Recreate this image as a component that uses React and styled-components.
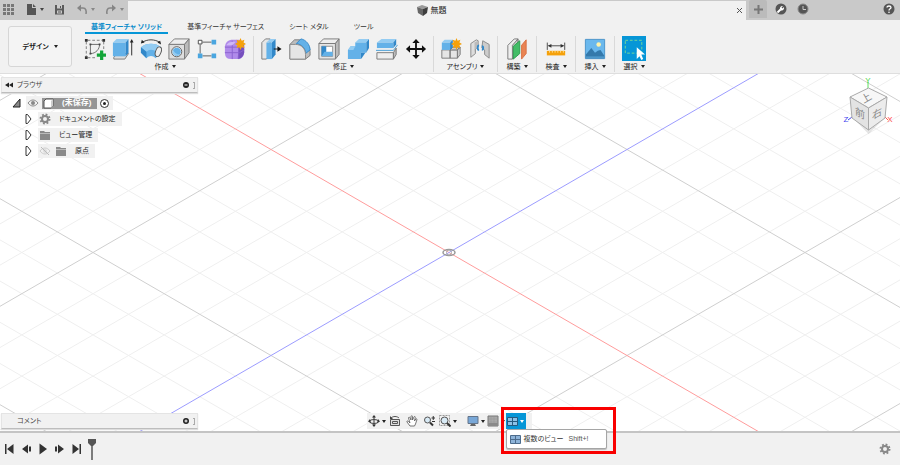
import React, { useState } from "react";
import styled, { createGlobalStyle } from "styled-components";

const GlobalStyle = createGlobalStyle`
    * {
        box-sizing: border-box;
    }

    body {
        margin: 0;
        background: #f1f1f1;
        color: #222;
        font-family: "Liberation Sans", "Noto Sans CJK JP", sans-serif;
        font-size: 7px;
        line-height: 10px;
        font-feature-settings: "palt";
    }

    button {
        display: flex;
        align-items: center;
        justify-content: center;
        margin: 0;
        padding: 0;
        border: 0;
        background: none;
        color: inherit;
        font: inherit;
        font-feature-settings: inherit;
        cursor: pointer;
    }

    svg {
        display: block;
        flex: none;
    }
`;

const Page = styled.div`
    display: flex;
    flex-direction: column;
    min-height: 100vh;
`;

const Caret = styled.span`
    flex: none;
    border: 2px solid transparent;
    border-top: 3px solid ${(props) => props.$color || "#222"};
    border-bottom: 0;
`;

/* title bar */

const TitleBar = styled.header`
    display: flex;
    align-items: stretch;
    height: 20px;
    background: #c9c9c9;
`;

const QuickAccess = styled.div`
    display: flex;
    align-items: center;
    flex: none;
    width: 128px;
    padding: 0 4px 2px 3px;
    justify-content: space-between;
`;

const QuickButton = styled.button`
    gap: 3px;
    height: 16px;
`;

const DocumentTab = styled.div`
    display: flex;
    align-items: center;
    flex: 1;
    margin-top: 1px;
    padding-right: 3px;
    background: #f1f1f1;
`;

const DocumentTitle = styled.div`
    display: flex;
    align-items: center;
    justify-content: center;
    flex: 1;
    gap: 3px;
    font-size: 8px;
`;

const CloseButton = styled.button`
    width: 8px;
    height: 12px;
`;

const TitleActions = styled.div`
    display: flex;
    align-items: center;
    flex: none;
    width: 154px;
    gap: 10px;
    padding: 0 5px 2px 3px;

    button:last-child {
        margin-left: auto;
    }
`;

const NewTabButton = styled.button`
    width: 18px;
    height: 18px;
    margin-right: -2px;
    border-radius: 2px 2px 0 0;
    background: #bbb;
`;

/* ribbon */

const Ribbon = styled.div`
    display: flex;
    flex: none;
    padding-left: 8px;
    border-bottom: 1px solid #dedede;
    background: #f1f1f1;
`;

const WorkspaceButton = styled.button`
    flex: none;
    gap: 5px;
    width: 64px;
    height: 41px;
    margin: 6px 5px 6px 0;
    border: 1px solid #d6d6d6;
    border-radius: 3px;
    background: #f4f4f4;
    font-weight: bold;
`;

const RibbonMain = styled.div`
    flex: 1;
`;

const TabList = styled.nav`
    display: flex;
    gap: 13px;
    padding: 2px 0 2px 8px;
`;

const RibbonTab = styled.button`
    height: 12px;
    padding: 0 6px;
    border-bottom: 2px solid ${(props) => (props.$active ? "#0696d7" : "transparent")};
    color: ${(props) => (props.$active ? "#0b8ccb" : "#333")};
    font-weight: ${(props) => (props.$active ? "bold" : "normal")};
    white-space: nowrap;
`;

const GroupRow = styled.div`
    display: flex;
`;

const Group = styled.section`
    padding: 0 ${(props) => props.$pad}px;

    & + & {
        border-left: 1px solid #d9d9d9;
    }
`;

const Tools = styled.div`
    display: flex;
    gap: ${(props) => props.$gap}px;
`;

const ToolButton = styled.button`
    width: 24px;
    height: 25px;
    background: ${(props) => (props.$active ? "#0696d7" : "none")};
`;

const GroupLabel = styled.button`
    gap: 3px;
    width: 100%;
    height: 11px;
    white-space: nowrap;
`;

/* modelling canvas */

const Canvas = styled.main`
    position: relative;
    display: flex;
    flex: 1;
    flex-direction: column;
    justify-content: space-between;
    background: #fff;
`;

const GridDrawing = styled.svg`
    position: absolute;
    inset: 0;
    width: 100%;
    height: 100%;
`;

const CanvasTop = styled.div`
    position: relative;
    display: flex;
    justify-content: space-between;
    padding: 3px 4px 0 1px;
`;

const BrowserColumn = styled.aside`
    width: 22%;
`;

const PanelBar = styled.div`
    display: flex;
    align-items: center;
    gap: 4px;
    height: 16px;
    padding: 0 2px 0 3px;
    border: 1px solid #e4e4e4;
    border-bottom-color: #bdbdbd;
    background: #f1f1f1;
    box-shadow: 0 1px 1px #ddd;
`;

const PanelTitle = styled.h2`
    flex: 1;
    margin: 0;
    padding-left: ${(props) => (props.$indent ? "12px" : "0")};
    color: #444;
    font-size: 7px;
    font-weight: normal;
`;

const Handle = styled.span`
    width: 2px;
    height: 7px;
    border: 1px solid #aaa;
    border-left: 0;
`;

const Tree = styled.ul`
    display: flex;
    flex-direction: column;
    gap: 2px;
    margin: 3px 0 0;
    padding: 0 0 0 10px;
    list-style: none;
`;

const TreeRow = styled.li`
    display: flex;
    align-items: center;
    gap: 5px;
    height: 14px;
    padding-left: ${(props) => (props.$level ? "12px" : "0")};
`;

const TreeItem = styled.div`
    display: flex;
    align-items: center;
    gap: ${(props) => (props.$tight ? "3px" : "8px")};
    height: 14px;
    padding: 0 ${(props) => (props.$tight ? "4px" : "6px")} 0 1px;
    background: #f1f1f1;
    white-space: nowrap;
`;

const IconPair = styled.span`
    display: flex;
    gap: 4px;
`;

const RootName = styled.span`
    display: flex;
    align-items: center;
    gap: 8px;
    height: 11px;
    padding: 0 6px 0 1px;
    background: #959595;
    color: #fff;
    font-size: 8px;
    font-weight: bold;
`;

const CanvasBottom = styled.div`
    position: relative;
    display: grid;
    grid-template-columns: 22% 1fr 22%;
    align-items: center;
    padding: 0 3px 2px 1px;
`;

const ViewTools = styled.div`
    display: flex;
    justify-self: center;
    height: 16px;
    padding-right: 6px;
    background: #f1f1f1;
`;

const ViewButton = styled.button`
    gap: 2px;
    width: ${(props) => (props.$menu ? "20px" : "17px")};
    height: 16px;
    margin-left: ${(props) => (props.$spaced ? "8px" : "0")};
    background: ${(props) => (props.$active ? "#0696d7" : "none")};
`;

const MultiView = styled.div`
    position: relative;
`;

const Highlight = styled.div`
    position: absolute;
    top: -6px;
    left: -5px;
    z-index: 1;
    width: 115px;
    height: 47px;
    border: 3px solid #f90000;
    pointer-events: none;
`;

const Tooltip = styled.div`
    position: absolute;
    top: 16px;
    left: 0;
    display: flex;
    align-items: center;
    gap: 3px;
    width: 101px;
    height: 20px;
    padding-left: 3px;
    border: 1px solid #a5a5a5;
    border-radius: 2px;
    background: #fff;
    box-shadow: 0 1px 1px #bbb;
    color: #333;
    white-space: nowrap;
`;

const Shortcut = styled.kbd`
    margin-left: 2px;
    color: #555;
    font-family: inherit;
`;

/* timeline */

const Timeline = styled.footer`
    display: flex;
    align-items: center;
    flex: none;
    gap: 3px;
    height: 34px;
    padding: 0 8px 0 2px;
    border-top: 2px solid #c4c4c4;
    background: #f1f1f1;
`;

const TimelineButton = styled.button`
    width: 14px;
    height: 16px;
    margin-left: ${(props) => (props.$end ? "auto" : "0")};
`;

const Icon = ({ size = 22, box = 24, width, children }) => (
    <svg width={width || size} height={size} viewBox={`0 0 ${width ? width : box} ${box}`} fill="none" aria-hidden="true">
        {children}
    </svg>
);

const BLUE = "#63b1e8";
const DEEP = "#3288c9";
const PALE = "#94ccf2";

const toolIcons = {
    sketch: (
        <Icon>
            <path d="M4 2.500h16M2.500 4v16M21.500 4v10M4 21.500h10" stroke="#777" strokeDasharray="3 2" />
            <path d="M1 1h3v3H1zM20 1h3v3h-3zM1 20h3v3H1z" fill="#333" />
            <path d="M7 17V7h10c0 5-4 10-10 10z" stroke="#666" />
            <path d="M6 6h2v2H6zM16 6h2v2h-2zM6 16h2v2H6z" fill="#444" />
            <path d="M17.500 13.500h3.500V17H24v3.500h-3V24h-3.500v-3.500H14V17h3.500z" fill="#13a538" />
        </Icon>
    ),
    extrude: (
        <Icon>
            <path d="M2 21l4-4h12l-4 6H2z" fill="#ddd" stroke="#777" />
            <path d="M1 5l4-4h13l-3 4z" fill={PALE} />
            <path d="M1 5h14v15H1z" fill={BLUE} />
            <path d="M15 5l3-4v15l-3 4z" fill={DEEP} />
            <path d="M21.500 19V4" stroke="#222" />
            <path d="M19.500 5l2-4 2 4z" fill="#222" />
        </Icon>
    ),
    revolve: (
        <Icon>
            <path d="M1 10c6-5 16-5 22 0v5l-6 7c-3-3-7-3-10 0l-6-6z" fill={BLUE} />
            <path d="M1 10c6-5 16-5 22 0l-5 5c-4-3-8-3-11 0z" fill={PALE} />
            <path d="M7 15v7l-6-6v-6z" fill={DEEP} />
            <ellipse cx="20" cy="15" rx="3" ry="5.500" transform="rotate(20 20 15)" fill="#eee" stroke="#555" />
            <path d="M2 5c6-4 14-4 20 0" stroke="#333" />
            <path d="M1 6l1-4 3 3zM23 7l-4-2 3-2z" fill="#222" />
        </Icon>
    ),
    hole: (
        <Icon>
            <path d="M1 7l6-6h16l-5 6z" fill="#eee" stroke="#777" />
            <path d="M18 7l5-6v15l-5 7z" fill="#bbb" stroke="#777" />
            <path d="M1 7h17v16H1z" fill="#dedede" stroke="#777" />
            <circle cx="9.500" cy="15" r="5.500" fill="#fff" stroke="#555" />
            <circle cx="9.500" cy="15" r="4.500" fill={BLUE} />
            <path d="M5 16c2 4 6 4 8 2-4 0-6-2-7-5z" fill={PALE} />
        </Icon>
    ),
    pattern: (
        <Icon>
            <path d="M7 4.500h10M4.500 7v10M7 19.500h10" stroke="#555" />
            <path d="M2.500 2.500h4v4h-4z" fill="#fff" stroke="#444" />
            <path d="M17 2h5v5h-5zM17 17h5v5h-5zM2 17h5v5H2z" fill="#4aa6e0" />
        </Icon>
    ),
    form: (
        <Icon>
            <path d="M8 2h8q6 1 6 7v7q-1 7-8 7H8q-7 0-7-7V9q1-6 7-7z" fill="#b08bea" />
            <path d="M16 9l6-2v9q-1 6-7 7z" fill="#7650bd" />
            <path d="M1 10h15l6-3M1 16h16l5-3M9 3v20M16 9v14" stroke="#8a63cf" />
            <path d="M3 7q2-3 6-3h4l-4 4H3z" fill="#cfb7f7" />
            <path d="M18 0l1.300 3 3-1-1 3 2.700 1.500-2.700 1.500 1 3-3-1L18 13l-1.300-3-3 1 1-3L12 6.500 14.700 5l-1-3 3 1z" fill="#f5a10a" />
        </Icon>
    ),
    pressPull: (
        <Icon>
            <path d="M2 5l4-4h5v17l-4 5H2z" fill="#e6e6e6" stroke="#777" />
            <path d="M7 5l4-4h6l-4 4z" fill={PALE} />
            <path d="M7 5h6v18H7z" fill={BLUE} />
            <path d="M13 5l4-4v17l-4 5z" fill={DEEP} />
            <path d="M15 12h6" stroke="#111" />
            <path d="M19 9l4.500 3-4.500 3z" fill="#111" />
        </Icon>
    ),
    fillet: (
        <Icon>
            <path d="M1 7l5-5h5c6 0 12 6 12 13v4l-5 4H1z" fill="#bdbdbd" stroke="#777" />
            <path d="M8 6l5-5c6 1 10 7 10 12l-5 4C18 11 14 7 8 6z" fill={BLUE} stroke={DEEP} />
            <path d="M1 23V7h6c7 0 11 5 11 11v5z" fill="#e5e5e5" stroke="#888" />
        </Icon>
    ),
    shell: (
        <Icon>
            <path d="M1 6l5-5h17l-4 5z" fill="#eee" stroke="#777" />
            <path d="M19 6l4-5v17l-4 5z" fill="#bbb" stroke="#777" />
            <path d="M1 6h18v17H1z" fill="#e5e5e5" stroke="#777" />
            <path d="M4 9h12v11H4z" fill="#fff" stroke="#888" />
            <path d="M4 9l5 6h7v5H4z" fill={BLUE} />
            <path d="M4 9l5 0v6H7l-3 5z" fill={DEEP} />
        </Icon>
    ),
    combine: (
        <Icon>
            <path d="M9 5l4-4h11l-3 4z" fill={PALE} />
            <path d="M21 5l3-4v10l-3 5z" fill={DEEP} />
            <path d="M1 13l3-4h5V5h12v11h-6v7H1z" fill={BLUE} />
            <path d="M15 16h5l-4 6-1 1z" fill={DEEP} />
            <path d="M1 13l3-4h5l-2 4z" fill={PALE} />
        </Icon>
    ),
    split: (
        <Icon>
            <path d="M1 5l5-4h16l-3 4z" fill={PALE} />
            <path d="M1 5h18v6H1z" fill={BLUE} />
            <path d="M19 5l3-4v6l-3 4z" fill={DEEP} />
            <path d="M0 13.500h19l4.500-6" stroke="#4199d4" />
            <path d="M1 16h18v7H1z" fill="#eee" stroke="#777" />
            <path d="M19 16l3-5v7l-3 5z" fill="#bbb" stroke="#777" />
        </Icon>
    ),
    move: (
        <Icon>
            <path d="M12 4v16M4 12h16" stroke="#111" strokeWidth="2" />
            <path d="M8 5.500L12 1l4 4.500zM8 18.500l4 4.500 4-4.500zM5.500 8L1 12l4.500 4zM18.500 8l4.500 4-4.500 4z" fill="#111" />
        </Icon>
    ),
    component: (
        <Icon>
            <path d="M2 13h9v9H2zM11 13h8v9h-8z" fill="#e5e5e5" stroke="#777" />
            <path d="M11 13l3-3h8l-3 3zM19 13l3-3v8l-3 4z" fill="#ccc" stroke="#777" />
            <path d="M2 5l3-3h9l-3 3z" fill={PALE} />
            <path d="M2 5h9v8H2z" fill={BLUE} />
            <path d="M11 5l3-3v8l-3 3z" fill={DEEP} />
            <path d="M18 0l1.200 3 3-1-1 3L24 6.500 21.200 8l1 3-3-1L18 13l-1.200-3-3 1 1-3L12 6.500 14.800 5l-1-3 3 1z" fill="#f5a10a" />
        </Icon>
    ),
    joint: (
        <Icon>
            <path d="M2 6l6-4 2 1v7l-3 2v5l-5 4z" fill="#ddd" stroke="#888" />
            <path d="M6 5l4-2v7l-3 2-1 4z" fill="#bbb" />
            <path d="M15 3l7 4v15l-5-4v-5l-3-2z" fill="#ccc" stroke="#888" />
            <path d="M11 8c-2 0-2 5 0 5M14 9c2 0 2 4 0 4" stroke={DEEP} strokeWidth="2" />
        </Icon>
    ),
    construct: (
        <Icon>
            <path d="M2 8l7-7h4v15l-6 7H2z" fill="#eee" stroke="#777" />
            <path d="M7 8l6-7v15l-6 7z" fill="#ccc" stroke="#777" />
            <path d="M8 9l7-6v14l-7 6z" fill="#43bd67" stroke="#299b4b" />
            <path d="M17 8l5-6v15l-5 6z" fill="#e98453" stroke="#d96d3e" />
        </Icon>
    ),
    measure: (
        <Icon>
            <path d="M2.500 5v8M21.500 5v8M4 8.500h16" stroke="#444" />
            <path d="M3 8.500l4-2v4zM21 8.500l-4-2v4z" fill="#333" />
            <path d="M2 14h20v5H2z" fill="#f5a10a" />
            <path d="M5 14v2M8 14v2M11 14v2M14 14v2M17 14v2M20 14v2" stroke="#ffdf9a" />
        </Icon>
    ),
    insert: (
        <Icon>
            <path d="M1.500 1.500h21v21h-21z" fill="#6ab8ed" stroke="#4792c7" />
            <circle cx="16" cy="7" r="2.500" fill="#fff3ac" />
            <path d="M2 18l6-7 4 5 3-2 3-1 4 6v3H2z" fill="#3479ab" />
            <path d="M2 20h20v2H2z" fill="#4e98ca" />
        </Icon>
    ),
    select: (
        <Icon>
            <path d="M2.500 2.500h18v14h-18z" stroke="#7bdc95" strokeDasharray="3 2" />
            <path d="M15 10v13l3-3 2 4 2-1-2-5h4z" fill="#fff" />
        </Icon>
    ),
};

const groups = [
    { label: "作成", pad: 6, gap: 4, tools: ["sketch", "extrude", "revolve", "hole", "pattern", "form"] },
    { label: "修正", pad: 5, gap: 5, tools: ["pressPull", "fillet", "shell", "combine", "split", "move"] },
    { label: "アセンブリ", pad: 5, gap: 5, tools: ["component", "joint"] },
    { label: "構築", pad: 7, gap: 0, tools: ["construct"] },
    { label: "検査", pad: 7, gap: 0, tools: ["measure"] },
    { label: "挿入", pad: 7, gap: 0, tools: ["insert"] },
    { label: "選択", pad: 7, gap: 0, tools: ["select"] },
];

const tabs = ["基準フィーチャ ソリッド", "基準フィーチャ サーフェス", "シート メタル", "ツール"];

const EyeIcon = ({ hidden }) => (
    <Icon size={12} box={12}>
        <path d="M1 6c3-4 7-4 10 0-3 4-7 4-10 0z" stroke={hidden ? "#ccc" : "#8b8b8b"} />
        <circle cx="6" cy="6" r="2" fill={hidden ? "#ddd" : "#888"} />
        {hidden && <path d="M2 2l8 8" stroke="#bbb" />}
    </Icon>
);

const FolderIcon = () => (
    <Icon size={12} box={12}>
        <path d="M1 2h4l1 1h5v8H1z" fill="#8a8a8a" />
        <path d="M1 4.500h10" stroke="#bbb" />
    </Icon>
);

const GearIcon = ({ color = "#888" }) => (
    <Icon size={12} box={12}>
        <circle cx="6" cy="6" r="4.500" stroke={color} strokeWidth="2" strokeDasharray="1.770 1.770" />
        <circle cx="6" cy="6" r="3" stroke={color} strokeWidth="2" />
    </Icon>
);

const ArrowIcon = ({ open }) => (
    <Icon size={10} box={10}>
        {open ? (
            <path d="M9 1v8H2z" fill="#888" stroke="#222" />
        ) : (
            <path d="M3 .500h1.500L8 5 4.500 9.500H3z" fill="#fff" stroke="#333" />
        )}
    </Icon>
);

const QuadIcon = ({ light }) => (
    <Icon size={11} box={11}>
        <path d="M.500 1.500h10v8H.500z" fill={light ? "#8cc2e8" : "#8eb4d9"} stroke={light ? "#245b80" : "#4d6c8c"} />
        <path d="M5.500 1v9M0 5.500h11" stroke={light ? "#245b80" : "#4d6c8c"} />
    </Icon>
);

const viewTools = [
    {
        name: "オービット",
        menu: true,
        icon: (
            <Icon size={12} box={12}>
                <path d="M6 1v10" stroke="#333" />
                <ellipse cx="6" cy="6.500" rx="4.500" ry="2" stroke="#444" />
                <path d="M4 2.500L6 0l2 2.500zM4 9.500L6 12l2-2.500zM2 4L0 6.500 3 8zM10 4l2 2.500L9 8z" fill="#333" />
            </Icon>
        ),
    },
    {
        name: "ビュー正面",
        icon: (
            <Icon size={12} box={12}>
                <path d="M1.500 4.500h9v6h-9zM3.500 6.500h5v2h-5z" fill="#ddd" stroke="#555" />
                <path d="M2 3c2-2 6-2 8 0" stroke="#555" />
                <path d="M1 1v3h3z" fill="#444" />
            </Icon>
        ),
    },
    {
        name: "画面移動",
        icon: (
            <Icon size={12} box={12}>
                <path
                    d="M4 11L1 7c-.500-1 .500-1.500 1.500-.500L4 8 2.500 3c0-1 1-1.200 1.500-.200L5 5V1.500c0-1 1.500-1 1.500 0V5L8 2c.400-1 1.500-.500 1.300.500L8.500 6l1.200-2c.500-.800 1.500-.200 1.200.800L9.500 9 8.500 11z"
                    fill="#fff"
                    stroke="#555"
                    strokeWidth=".8"
                />
            </Icon>
        ),
    },
    {
        name: "ズーム",
        icon: (
            <Icon size={12} box={12}>
                <circle cx="4.500" cy="5" r="3" fill="#d8eaf5" stroke="#555" />
                <path d="M7 7.500l3 3" stroke="#333" strokeWidth="2" />
                <path d="M8.500 3H12M10.250 1v4M9 6.500h3" stroke="#333" />
            </Icon>
        ),
    },
    {
        name: "フィット",
        menu: true,
        icon: (
            <Icon size={12} box={12}>
                <path d="M.500.500h10v10H.500z" stroke="#999" strokeDasharray="2 1" />
                <circle cx="5.500" cy="5.500" r="3.500" fill="#d8eaf5" stroke="#555" />
                <path d="M8 8l3.500 3.500" stroke="#333" strokeWidth="2" />
            </Icon>
        ),
    },
    {
        name: "表示設定",
        menu: true,
        spaced: true,
        icon: (
            <Icon size={12} box={12}>
                <path d="M1 1.500h10v7H1z" fill="#79a8d8" stroke="#64758a" />
                <path d="M4 9h4l1 2H3z" fill="#666" />
            </Icon>
        ),
    },
    {
        name: "グリッドとスナップ",
        menu: true,
        icon: (
            <Icon size={12} box={12}>
                <path d="M1 1h10v10H1z" fill="#a9a9a9" stroke="#777" />
                <path d="M1 4h10M1 7h10M4 1v10M7 1v10" stroke="#959595" strokeWidth=".5" />
                <path d="M1 8h10v3H1z" fill="#8a8a8a" />
            </Icon>
        ),
    },
];

const playback = [
    { name: "先頭へ", path: "M2 1h1.500v10H2zM10.500 1v10L4 6z" },
    { name: "前へ", path: "M8 1.500v9L2 6zM9 3.500h2v5H9z" },
    { name: "再生", path: "M2.500 0.500v11L10 6z" },
    { name: "次へ", path: "M4 1.500v9L10 6zM1 3.500h2v5H1z" },
    { name: "末尾へ", path: "M1.500 1v10L8 6zM8.500 1H10v10H8.500z" },
];

// isometric floor: five small cells for each large one, origin at 449,179
const CX = 449;
const CY = 179;
const STEP_X = 356 / 5;
const SLOPE = 103 / 178;

const FloorGrid = () => {
    const lines = [];
    for (let i = -16; i <= 16; i++) {
        if (i === 0) continue;
        const x = CX + i * STEP_X;
        const stroke = i % 5 === 0 ? "#cfcfcf" : "#efefef";
        lines.push(
            <path key={i} d={`M${x - 900} ${CY - 900 * SLOPE}L${x + 900} ${CY + 900 * SLOPE}M${x - 900} ${CY + 900 * SLOPE}L${x + 900} ${CY - 900 * SLOPE}`} stroke={stroke} />
        );
    }
    const major = lines.filter((line) => Number(line.key) % 5 === 0);
    const minor = lines.filter((line) => Number(line.key) % 5 !== 0);

    return (
        <GridDrawing viewBox="0 0 900 358" preserveAspectRatio="xMidYMid slice" fill="none" aria-hidden="true">
            {minor}
            {major}
            <path d={`M${CX - 900} ${CY - 900 * SLOPE}L${CX + 900} ${CY + 900 * SLOPE}`} stroke="#ff9c9c" />
            <path d={`M${CX - 900} ${CY + 900 * SLOPE}L${CX + 900} ${CY - 900 * SLOPE}`} stroke="#9c9cff" />
            <ellipse cx={CX} cy={CY} rx="6" ry="3" stroke="#999" strokeWidth="1.500" />
            <circle cx={CX} cy={CY} r="2.500" stroke="#aaa" />
        </GridDrawing>
    );
};

const ViewCube = () => (
    <svg width="56" height="60" viewBox="0 0 56 60" role="img" aria-label="ビューキューブ">
        <path d="M12 40l16.500 17L46 40z" fill="#000" opacity=".1" />
        <path d="M28 5v6" stroke="#5ee05e" />
        <path d="M12 40l-4 3" stroke="#4444ee" />
        <path d="M45 40l3 3" stroke="#ff5555" />
        <path d="M28.500 11L47 20 28.500 31 10 20z" fill="#f7f7f7" stroke="#aaa" />
        <path d="M10 20l18.500 11v22L12 41z" fill="#e3e3e3" stroke="#aaa" />
        <path d="M47 20L28.500 31v22L45 41z" fill="#ececec" stroke="#aaa" />
        <g fill="#888" fontSize="10" textAnchor="middle">
            <text transform="translate(28 24) rotate(-30)">上</text>
            <text transform="translate(20 40) skewY(28)">前</text>
            <text transform="translate(37 40) skewY(-28)">右</text>
        </g>
        <g fontSize="8" textAnchor="middle">
            <text x="28" y="6" fill="#4bd64b">Y</text>
            <text x="6" y="45" fill="#4444ee">Z</text>
            <text x="50" y="45" fill="#ff4444">X</text>
        </g>
    </svg>
);

const TitleSection = () => (
    <TitleBar>
        <QuickAccess>
            <QuickButton aria-label="データパネル">
                <Icon size={11} box={11}>
                    <path d="M0 0h3v3H0zM4 0h3v3H4zM8 0h3v3H8zM0 4h3v3H0zM4 4h3v3H4zM8 4h3v3H8zM0 8h3v3H0zM4 8h3v3H4zM8 8h3v3H8z" fill="#777" />
                </Icon>
            </QuickButton>
            <QuickButton aria-label="ファイル">
                <Icon size={12} box={12}>
                    <path d="M2 1h5v4h4v7H2zM8 1l3 3H8z" fill="#555" />
                </Icon>
                <Caret $color="#444" />
            </QuickButton>
            <QuickButton aria-label="保存">
                <Icon size={11} box={11}>
                    <path d="M1 1h9v9.500H1z" fill="#5b5b5b" />
                    <path d="M3 1h5v3.500H3zM3 6.500h5v3H3z" fill="#ccc" />
                    <path d="M4 8h3M6.500 2v2" stroke="#555" />
                </Icon>
            </QuickButton>
            <QuickButton aria-label="元に戻す">
                <Icon size={12} box={12}>
                    <path d="M3 5h4c3 0 3.500 3 3 6" stroke="#858585" strokeWidth="1.500" />
                    <path d="M1 5l4-3.500v7z" fill="#858585" />
                </Icon>
                <Caret $color="#888" />
            </QuickButton>
            <QuickButton aria-label="やり直し">
                <Icon size={12} box={12}>
                    <path d="M9 5H5c-3 0-3.500 3-3 6" stroke="#858585" strokeWidth="1.500" />
                    <path d="M11 5L7 1.500v7z" fill="#858585" />
                </Icon>
                <Caret $color="#888" />
            </QuickButton>
        </QuickAccess>
        <DocumentTab>
            <DocumentTitle>
                <Icon size={11} box={11}>
                    <path d="M0 2l5-2 6 2-5 2z" fill="#999" />
                    <path d="M0 2l6 2v7L1 8z" fill="#666" />
                    <path d="M11 2L6 4v7l4-3z" fill="#3e3e3e" />
                </Icon>
                無題
            </DocumentTitle>
            <CloseButton aria-label="閉じる">
                <Icon size={7} box={7}>
                    <path d="M1 1l5 5M6 1L1 6" stroke="#555" />
                </Icon>
            </CloseButton>
        </DocumentTab>
        <TitleActions>
            <NewTabButton aria-label="新しいデザイン">
                <Icon size={9} box={9}>
                    <path d="M4.500 0v9M0 4.500h9" stroke="#777" strokeWidth="2" />
                </Icon>
            </NewTabButton>
            <button aria-label="拡張機能">
                <Icon size={12} box={12}>
                    <circle cx="6" cy="6" r="5.500" fill="#555" />
                    <path d="M2.500 9.500l3-3" stroke="#fff" strokeWidth="2" />
                    <path d="M5 6.500c-.500-2 1-4 3-3.500L6.500 4.500l1 1L9 4c.500 2-1 4-3 3.500z" fill="#fff" />
                </Icon>
            </button>
            <button aria-label="ジョブの状態">
                <Icon size={12} box={12}>
                    <circle cx="6" cy="6" r="5" fill="#555" stroke="#8a8a8a" />
                    <path d="M6 3v3.500h3" stroke="#ccc" />
                </Icon>
            </button>
            <button aria-label="ヘルプ">
                <Icon size={12} box={12}>
                    <circle cx="6" cy="6" r="5.500" fill="#555" />
                    <path d="M4 4.500C4 2.500 8 2.500 8 4.500 8 6 6 5.500 6 7.500" stroke="#fff" strokeWidth="1.300" />
                    <circle cx="6" cy="9.200" r=".8" fill="#fff" />
                </Icon>
            </button>
        </TitleActions>
    </TitleBar>
);

const BrowserPanel = () => (
    <BrowserColumn>
        <PanelBar>
            <Icon size={8} box={8}>
                <path d="M4 1.500v5L0 4zM8 1.500v5L4 4z" fill="#222" />
            </Icon>
            <PanelTitle>ブラウザ</PanelTitle>
            <button aria-label="ブラウザを閉じる">
                <Icon size={6} box={6}>
                    <circle cx="3" cy="3" r="3" fill="#222" />
                    <path d="M1.500 3h3" stroke="#fff" />
                </Icon>
            </button>
            <Handle />
        </PanelBar>
        <Tree>
            <TreeRow>
                <ArrowIcon open />
                <TreeItem $tight>
                    <EyeIcon />
                    <RootName>
                        <Icon size={11} box={11}>
                            <path d="M1 3l2-2h7v7l-2 2H1z" fill="#fff" stroke="#555" />
                            <path d="M8 3l2-2v7l-2 2z" fill="#ccc" />
                        </Icon>
                        (未保存)
                    </RootName>
                    <Icon size={9} box={9}>
                        <circle cx="4.500" cy="4.500" r="4" fill="#fff" stroke="#333" />
                        <circle cx="4.500" cy="4.500" r="1.500" fill="#222" />
                    </Icon>
                </TreeItem>
            </TreeRow>
            <TreeRow $level>
                <ArrowIcon />
                <TreeItem>
                    <GearIcon />
                    ドキュメントの設定
                </TreeItem>
            </TreeRow>
            <TreeRow $level>
                <ArrowIcon />
                <TreeItem>
                    <FolderIcon />
                    ビュー管理
                </TreeItem>
            </TreeRow>
            <TreeRow $level>
                <ArrowIcon />
                <TreeItem>
                    <IconPair>
                        <EyeIcon hidden />
                        <FolderIcon />
                    </IconPair>
                    原点
                </TreeItem>
            </TreeRow>
        </Tree>
    </BrowserColumn>
);

const App = () => {
    const [activeTab, setActiveTab] = useState(0);

    return (
        <Page>
            <GlobalStyle />
            <TitleSection />
            <Ribbon>
                <WorkspaceButton>
                    デザイン
                    <Caret />
                </WorkspaceButton>
                <RibbonMain>
                    <TabList>
                        {tabs.map((tab, index) => (
                            <RibbonTab key={tab} $active={index === activeTab} onClick={() => setActiveTab(index)}>
                                {tab}
                            </RibbonTab>
                        ))}
                    </TabList>
                    <GroupRow>
                        {groups.map((group) => (
                            <Group key={group.label} $pad={group.pad}>
                                <Tools $gap={group.gap}>
                                    {group.tools.map((tool) => (
                                        <ToolButton key={tool} aria-label={tool} $active={tool === "select"}>
                                            {toolIcons[tool]}
                                        </ToolButton>
                                    ))}
                                </Tools>
                                <GroupLabel>
                                    {group.label}
                                    <Caret />
                                </GroupLabel>
                            </Group>
                        ))}
                    </GroupRow>
                </RibbonMain>
            </Ribbon>
            <Canvas>
                <FloorGrid />
                <CanvasTop>
                    <BrowserPanel />
                    <ViewCube />
                </CanvasTop>
                <CanvasBottom>
                    <PanelBar>
                        <PanelTitle $indent>コメント</PanelTitle>
                        <button aria-label="コメントを追加">
                            <Icon size={6} box={6}>
                                <circle cx="3" cy="3" r="3" fill="#222" />
                                <path d="M1.500 3h3M3 1.500v3" stroke="#fff" />
                            </Icon>
                        </button>
                        <Handle />
                    </PanelBar>
                    <ViewTools>
                        {viewTools.map((tool) => (
                            <ViewButton key={tool.name} aria-label={tool.name} $menu={tool.menu} $spaced={tool.spaced}>
                                {tool.icon}
                                {tool.menu && <Caret />}
                            </ViewButton>
                        ))}
                        <MultiView>
                            <ViewButton aria-describedby="multi-view-tip" aria-label="複数のビュー" $menu $active>
                                <QuadIcon light />
                                <Caret $color="#fff" />
                            </ViewButton>
                            <Tooltip id="multi-view-tip" role="tooltip">
                                <QuadIcon />
                                複数のビュー
                                <Shortcut>Shift+!</Shortcut>
                            </Tooltip>
                            <Highlight />
                        </MultiView>
                    </ViewTools>
                </CanvasBottom>
            </Canvas>
            <Timeline>
                {playback.map((item) => (
                    <TimelineButton key={item.name} aria-label={item.name}>
                        <Icon size={12} box={12}>
                            <path d={item.path} fill="#333" />
                        </Icon>
                    </TimelineButton>
                ))}
                <Icon size={24} width={10}>
                    <path d="M1 2h8v4L6 9H4L1 6z" fill="#555" />
                    <path d="M5 8v15" stroke="#555" strokeWidth="1.500" />
                </Icon>
                <TimelineButton aria-label="設定" $end>
                    <GearIcon />
                </TimelineButton>
            </Timeline>
        </Page>
    );
};

export default App;
